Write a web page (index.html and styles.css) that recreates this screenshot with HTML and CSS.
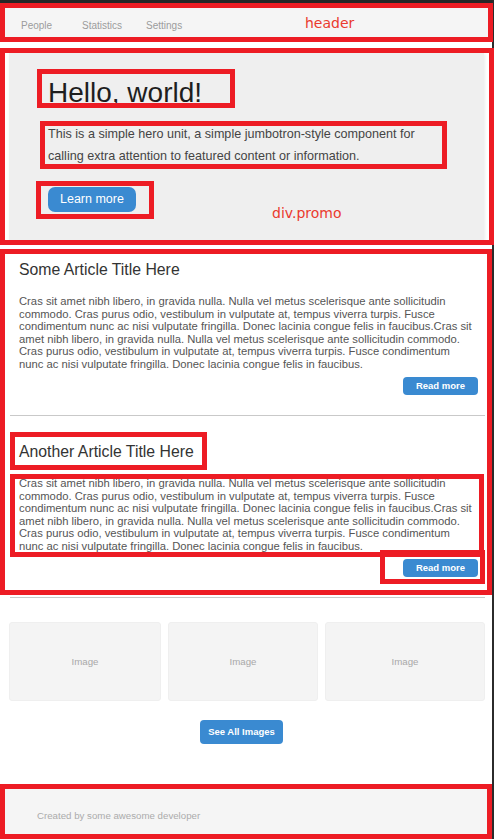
FILE: index.html
```html
<!DOCTYPE html>
<html lang="en">
<head>
<meta charset="utf-8">
<title>Page</title>
<link rel="stylesheet" href="styles.css">
</head>
<body>
<div class="page">
  <div class="topbar"></div>
  <header class="site-header">
    <nav class="nav">
      <a href="#">People</a>
      <a href="#">Statistics</a>
      <a href="#">Settings</a>
    </nav>
  </header>

  <div class="promo">
    <h1>Hello, world!</h1>
    <p>This is a simple hero unit, a simple jumbotron-style component for calling extra attention to featured content or information.</p>
    <a href="#" class="btn btn-lg">Learn more</a>
  </div>

  <section class="articles">
    <article class="article">
      <h2>Some Article Title Here</h2>
      <p>Cras sit amet nibh libero, in gravida nulla. Nulla vel metus scelerisque ante sollicitudin commodo. Cras purus odio, vestibulum in vulputate at, tempus viverra turpis. Fusce condimentum nunc ac nisi vulputate fringilla. Donec lacinia congue felis in faucibus.Cras sit amet nibh libero, in gravida nulla. Nulla vel metus scelerisque ante sollicitudin commodo. Cras purus odio, vestibulum in vulputate at, tempus viverra turpis. Fusce condimentum nunc ac nisi vulputate fringilla. Donec lacinia congue felis in faucibus.</p>
      <div class="article-actions"><a href="#" class="btn btn-sm">Read more</a></div>
    </article>
    <hr class="divider">
    <article class="article">
      <h2>Another Article Title Here</h2>
      <p>Cras sit amet nibh libero, in gravida nulla. Nulla vel metus scelerisque ante sollicitudin commodo. Cras purus odio, vestibulum in vulputate at, tempus viverra turpis. Fusce condimentum nunc ac nisi vulputate fringilla. Donec lacinia congue felis in faucibus.Cras sit amet nibh libero, in gravida nulla. Nulla vel metus scelerisque ante sollicitudin commodo. Cras purus odio, vestibulum in vulputate at, tempus viverra turpis. Fusce condimentum nunc ac nisi vulputate fringilla. Donec lacinia congue felis in faucibus.</p>
      <div class="article-actions"><a href="#" class="btn btn-sm">Read more</a></div>
    </article>
    <hr class="divider">
  </section>

  <section class="gallery">
    <div class="thumbs">
      <div class="thumb">Image</div>
      <div class="thumb">Image</div>
      <div class="thumb">Image</div>
    </div>
    <div class="more"><a href="#" class="btn btn-md">See All Images</a></div>
  </section>

  <footer class="site-footer">Created by some awesome developer</footer>
</div>

<div class="annotations" aria-hidden="true">
  <span class="ann ann-header"></span>
  <span class="ann-label label-header">header</span>
  <span class="ann ann-promo"></span>
  <span class="ann ann-h1"></span>
  <span class="ann ann-lead"></span>
  <span class="ann ann-learn"></span>
  <span class="ann-label label-promo">div.promo</span>
  <span class="ann ann-articles"></span>
  <span class="ann ann-title2"></span>
  <span class="ann ann-text2"></span>
  <span class="ann ann-btn2"></span>
  <span class="ann ann-footer"></span>
</div>
</body>
</html>
```

FILE: styles.css
```css
* { box-sizing: border-box; }

html, body {
  margin: 0;
  padding: 0;
  background: #ffffff;
}

body {
  position: relative;
  width: 494px;
  height: 839px;
  overflow: hidden;
  font-family: "Liberation Sans", Arial, sans-serif;
}

.page {
  width: 494px;
  min-height: 839px;
  border-right: 2px solid #2b2b2b;
  background: #ffffff;
}

.topbar {
  height: 3px;
  background: #262626;
}

/* header */
.site-header {
  height: 39px;
  background: #f5f5f5;
  padding-top: 17px;
}

.nav {
  display: grid;
  grid-template-columns: 61px 64px auto;
  padding-left: 21px;
  font-size: 10px;
  line-height: 12px;
}

.nav a {
  color: #9c9c9c;
  text-decoration: none;
}

/* promo */
.promo {
  margin: 11px 8px 0 9px;
  height: 187px;
  padding: 24px 40px 0 39px;
  background: #efefef;
  box-shadow: 1px 1px 3px rgba(0, 0, 0, 0.08);
}

.promo h1 {
  margin: 0;
  font-size: 28px;
  line-height: 32px;
  font-weight: normal;
  color: #1e1e1e;
}

.promo p {
  margin: 14px 0 0;
  max-width: 385px;
  font-size: 12.6px;
  line-height: 22px;
  color: #444;
}

.btn {
  display: inline-block;
  background: #3a8ad1;
  color: #ffffff;
  text-decoration: none;
  white-space: nowrap;
}

.btn-lg {
  margin-top: 20px;
  height: 25px;
  line-height: 25px;
  padding: 0 12px;
  border-radius: 7px;
  font-size: 12.5px;
}

.btn-sm {
  height: 18px;
  line-height: 18px;
  padding: 0 13px;
  border-radius: 4px;
  font-size: 9.5px;
  font-weight: bold;
}

.btn-md {
  height: 24px;
  line-height: 24px;
  padding: 0 8px;
  border-radius: 4px;
  font-size: 9.5px;
  font-weight: bold;
}

/* articles */
.articles {
  padding: 0 14px 0 19px;
}

.article {
  padding-top: 27px;
}

.article:first-child {
  padding-top: 21px;
}

.article h2 {
  margin: 0;
  font-size: 15.8px;
  line-height: 18px;
  font-weight: normal;
  color: #333;
}

.article p {
  margin: 16px 3px 0 0;
  font-size: 11.25px;
  line-height: 12.5px;
  color: #555;
}

.article-actions {
  display: flex;
  justify-content: flex-end;
  margin-top: 7px;
  margin-bottom: 20px;
}

.divider {
  height: 0;
  margin: 0 -7px 0 -9px;
  border: 0;
  border-top: 1px solid #c9c9c9;
}

/* gallery */
.gallery {
  padding: 24px 7px 0 9px;
}

.thumbs {
  display: grid;
  grid-template-columns: 152px 150px 1fr;
  gap: 7px;
}

.thumb {
  height: 79px;
  display: flex;
  align-items: center;
  justify-content: center;
  background: #f4f4f4;
  border: 1px solid #efefef;
  border-radius: 3px;
  font-size: 9.7px;
  color: #a8a8a8;
}

.more {
  margin-top: 19px;
  padding-right: 11px;
  display: flex;
  justify-content: center;
}

/* footer */
.site-footer {
  margin-top: 40px;
  height: 55px;
  padding: 26px 0 0 37px;
  background: #f5f5f5;
  font-size: 9.7px;
  line-height: 12px;
  color: #ababab;
}

/* annotation overlay */
.annotations {
  position: absolute;
  left: 0;
  top: 0;
  width: 494px;
  height: 839px;
  pointer-events: none;
}

.ann {
  position: absolute;
  border: 5px solid #ed1c24;
}

.ann-header   { left: 0;   top: 3px;   width: 493px; height: 39px; }
.ann-promo    { left: 0;   top: 48px;  width: 494px; height: 197px; }
.ann-h1       { left: 37px; top: 69px; width: 198px; height: 39px; }
.ann-lead     { left: 40px; top: 121px; width: 407px; height: 48px; }
.ann-learn    { left: 36px; top: 181px; width: 118px; height: 38px; }
.ann-articles { left: 0;   top: 249px; width: 492px; height: 346px; }
.ann-title2   { left: 10px; top: 432px; width: 197px; height: 38px; }
.ann-text2    { left: 10px; top: 474px; width: 474px; height: 83px; }
.ann-btn2     { left: 380px; top: 550px; width: 105px; height: 34px; }
.ann-footer   { left: 0;   top: 784px; width: 492px; height: 55px; }

.ann-label {
  position: absolute;
  font-family: "DejaVu Sans", sans-serif;
  font-size: 14px;
  line-height: 16px;
  color: #ea3a2e;
  white-space: nowrap;
}

.label-header { left: 305px; top: 15px; }
.label-promo  { left: 272px; top: 205px; }
```
